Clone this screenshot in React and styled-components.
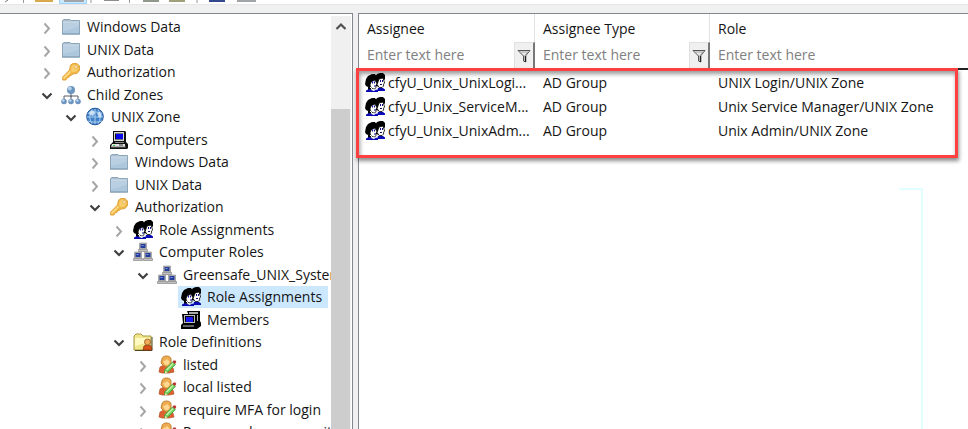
import React from "react";
import styled, { createGlobalStyle } from "styled-components";

const GlobalStyle = createGlobalStyle`
  * { box-sizing: border-box; }
  body {
    margin: 0;
    background: #f0f0f0;
    color: #151515;
    font: 14px/22px "Open Sans", "Noto Sans", sans-serif;
  }
`;

const Window = styled.div`
  display: flex;
  flex-direction: column;
  height: 100vh;
  overflow: hidden;
`;

const Toolbar = styled.div`
  flex: none;
  height: 5px;
  background: #fff;
  border-bottom: 1px solid #e6e6e6;
`;

const ToolbarArt = styled.svg`
  display: block;
`;

const Panes = styled.div`
  flex: 1;
  min-height: 0;
  display: flex;
  gap: 5px;
  padding-top: 8px;
`;

const TreePane = styled.nav`
  flex: none;
  width: 353px;
  display: flex;
  border: solid #828790;
  border-width: 1px 1px 0 0;
  background: #fff;
  padding: 2px 1px 0 0;
  overflow: hidden;
`;

const TreeList = styled.ul`
  flex: 1;
  min-width: 0;
  margin: 0;
  padding: 0;
  list-style: none;
  overflow: hidden;
`;

const TreeRow = styled.li`
  display: flex;
  align-items: center;
  height: 22px;
  padding-left: ${(p) => p.$level * 24 + 14}px;
  white-space: nowrap;
  &:nth-child(even) { height: 23px; }
`;

const Toggle = styled.button`
  flex: none;
  display: flex;
  align-items: center;
  justify-content: center;
  width: 18px;
  height: 20px;
  padding: 2px 0 0;
  border: 0;
  background: none;
`;

const ToggleGap = styled.span`
  flex: none;
  width: 18px;
`;

const TreeLabel = styled.a`
  flex: none;
  display: flex;
  align-items: center;
  align-self: stretch;
  gap: 6px;
  margin-left: 2px;
  padding: 0 6px 0 3px;
  color: inherit;
  text-decoration: none;
  background: ${(p) => (p.$selected ? "#cce8ff" : "transparent")};
`;

const Scrollbar = styled.div`
  flex: none;
  display: flex;
  flex-direction: column;
  width: 20px;
  background: #f0f0f0;
`;

const ScrollUp = styled.button`
  height: 20px;
  padding: 2px 0 0;
  border: 0;
  background: none;
  display: flex;
  align-items: center;
  justify-content: center;
`;

const ScrollThumb = styled.div`
  flex: 1;
  margin: 73px 1px 0 0;
  background: #cdcdcd;
`;

const ListPane = styled.main`
  flex: 1;
  min-width: 0;
  position: relative;
  border: solid #828790;
  border-width: 1px 0 0 1px;
  background: #fff;
`;

const Table = styled.table`
  width: 100%;
  table-layout: fixed;
  border-collapse: separate;
  border-spacing: 0;
`;

const Col = styled.col`
  width: ${(p) => p.$width};
`;

const HeadCell = styled.th`
  height: 28px;
  padding: 2px 0 0 8px;
  border-right: 1px solid ${(p) => (p.$last ? "transparent" : "#e2e2e2")};
  font-weight: 400;
  text-align: left;
`;

const FilterCell = styled.td`
  height: 28px;
  padding: 0;
  border-bottom: 2px solid #222;
`;

const FilterBox = styled.div`
  display: flex;
  height: 26px;
`;

const FilterInput = styled.input`
  flex: 1;
  min-width: 0;
  padding: 0 0 0 8px;
  border: 0;
  outline: 0;
  background: none;
  font: inherit;
  &::placeholder { color: #808080; opacity: 1; }
`;

const FilterButton = styled.button`
  flex: none;
  display: flex;
  align-items: center;
  justify-content: center;
  width: 21px;
  padding: 0;
  border: solid;
  border-width: 1px 2px 0 1px;
  border-color: #e0e0e0 #777 #777 #e0e0e0;
  background: #f0f0f0;
`;

const Cell = styled.td`
  height: 24px;
  padding: 2px 0 0 8px;
  white-space: nowrap;
`;

const Assignee = styled.div`
  display: flex;
  align-items: center;
  gap: 3px;
  height: 22px;
  margin-left: -2px;
`;

const Highlight = styled.div`
  position: absolute;
  top: 54px;
  left: -3px;
  right: 10px;
  height: 90px;
  border: 3px solid #ff4040;
  box-shadow: 1px 3px 4px rgba(0, 0, 0, 0.45), inset 1px 3px 4px rgba(0, 0, 0, 0.4);
  pointer-events: none;
`;

const Guide = styled.div`
  position: absolute;
  top: 174px;
  right: 45px;
  bottom: 0;
  width: 24px;
  border: solid #e0ffff;
  border-width: 2px 2px 0 0;
`;

const IconSvg = styled.svg`
  flex: none;
  display: block;
`;

const Svg = ({ w = 20, h = 20, children }) => (
  <IconSvg width={w} height={h} viewBox={`0 0 ${w} ${h}`} aria-hidden="true">
    {children}
  </IconSvg>
);

const Chevron = ({ open }) =>
  open ? (
    <Svg w={12} h={12}><path d="M1.500 3.500 6 8l4.500-4.500" fill="none" stroke="#404040" strokeWidth="2.200" /></Svg>
  ) : (
    <Svg w={12} h={12}><path d="M3.500 1.500 8 6.500 3.500 11.500" fill="none" stroke="#a6a6a6" strokeWidth="2" /></Svg>
  );

const Folder = () => (
  <Svg>
    <path d="M1.500 3.500 3 2.500h6l1 1h8.500V17h-17z" fill="#a9bfd1" stroke="#8fa6b9" />
    <path d="M2 5.500h16v11H2z" fill="#adc8dd" />
    <path d="M2 5.500h16v4L2 14z" fill="#bad0e2" />
    <path d="M2 5h16" stroke="#d3e1eb" />
    <path d="M1 17h18" stroke="#7f98ae" />
  </Svg>
);

const Key = () => (
  <Svg>
    <path d="M9.500 3 12 1.500h4l2.500 2.500v4.500L16 11.500l-4 .5-2 1.500-1.500.2-.4 1.600-1.900.4-1.200 2.300H1.700v-3L8.500 8z" fill="#efb647" stroke="#e3a640" strokeLinejoin="round" />
    <path d="m10.500 4 2.500-1.500 3.500.8 1 3-2 3.200-4 .8-1.500-2z" fill="#f8cd6c" />
    <path d="m2.500 16.500 7-7" stroke="#ffe18e" strokeWidth="1.500" />
    <circle cx="15" cy="5" r="1.400" fill="#fff8df" stroke="#d89731" strokeWidth=".6" />
  </Svg>
);

const Zones = () => (
  <Svg>
    <path d="M10 8v4M3 14v-3h14v3M10 11v3" stroke="#555e69" fill="none" />
    <circle cx="10" cy="5" r="4" fill="#6b94c0" />
    <circle cx="8.800" cy="3.500" r="2" fill="#b4cfe8" />
    {[3, 10, 17].map((x) => (
      <g key={x}>
        <circle cx={x} cy="16.500" r="2.800" fill="#6d94bf" />
        <circle cx={x - 0.7} cy="15.500" r="1.200" fill="#bcd7ef" />
      </g>
    ))}
  </Svg>
);

const Globe = () => (
  <Svg>
    <circle cx="10" cy="9.500" r="8.300" fill="#3f80c6" stroke="#24559a" />
    <path d="M3 6.500c4-2 10-2 14 0M2 10h16M3 14c4 1.500 10 1.500 14 0M10 2v15M7 2.500c-3 4-3 10 0 14M13 2.500c3 4 3 10 0 14" fill="none" stroke="#a8cef2" />
    <path d="m4 5 4-2 2 3-2 3-3-1zm8 1 3-1 2 4-3 2z" fill="#e2f1fd" opacity=".8" />
  </Svg>
);

const Computer = () => (
  <Svg>
    <path d="M4 1h12l1 1v10l2 2v4l-1 1H1v-4l3-3z" fill="#111" />
    <path d="M5 2h10v9H5z" fill="#d6d6d6" />
    <path d="M6 3.500h8v6H6z" fill="#111" />
    <path d="M7 4h7v5H7z" fill="#0909ee" />
    <path d="M6 12h9v1H6z" fill="#888" />
    <path d="M3 14h13v3H2z" fill="#e3e3e3" />
    <path d="M2 17h15" stroke="#777" />
    <path d="M4 15h2v1H4z" fill="#38cf38" />
    <path d="M10 15h4" stroke="#333" />
  </Svg>
);

const People = () => (
  <Svg>
    <path d="m11 13-1-9 2-3 3-1h3l2 2v4l-2 3-3 5z" fill="#000" />
    <path d="m14 6 4-1 1 3 .6 2-1 1v2l-1.500 1.500h-3l-2-3z" fill="#fff" stroke="#000" strokeWidth=".8" />
    <path d="M15 7h1v2h-1zm2 0h1v2h-1zm-2 4h2v1h-2z" fill="#101080" />
    <path d="M13 15h5l2 1.500V18h-8z" fill="#0909b5" />
    <path d="m0 11 1-5 2-3 4-2h3l2 3v4l-2 3-3 5-2 1H3v-3l-2-1z" fill="#000" />
    <path d="m6 9 4-2 1 2 1 2-1 1v3l-2 1-3-1-1-3z" fill="#fff" stroke="#000" strokeWidth=".7" />
    <path d="M7 8.500h1v2H7zm2 0h1v2H9zm0 4h2v1H9z" fill="#1010a0" />
    <path d="M1 19v-1.500l3-1.500 2 1 3 1 2-1.500 2 1V19z" fill="#0909b5" />
    <path d="m5 14 3 3h1" fill="none" stroke="#fff" />
  </Svg>
);

const MiniPc = ({ x, y }) => (
  <g transform={`translate(${x} ${y})`}>
    <path d="M1 0h7v6H1z" fill="#b4b4b4" stroke="#8c8c8c" strokeWidth=".6" />
    <path d="M2 1h5v4H2z" fill="#263c9b" />
    <path d="M3 2h2v1H3z" fill="#7e9ae0" />
    <path d="M0 6.500h9v2H0z" fill="#c2c2c2" stroke="#777" strokeWidth=".6" />
  </g>
);

const ComputerRoles = () => (
  <Svg><MiniPc x={5.5} y={1} /><MiniPc x={0.5} y={10} /><MiniPc x={10.5} y={10} /></Svg>
);

const Members = () => (
  <Svg>
    <path d="M6 1h13v10l1 2v3l-4 3h-3z" fill="#000" />
    <path d="M8 2h9v2H8z" fill="#aaa" />
    <path d="M16 5h1v6h-1z" fill="#aaa" />
    <path d="M1 4h14v10l1 1v3l-1 1H0v-4l2-2z" fill="#000" />
    <path d="M3 5h11v8H3z" fill="#b9b9b9" />
    <path d="M4 6h9v6H4z" fill="#000" />
    <path d="M5 7h7v5H5z" fill="#1717ef" />
    <path d="M2 16h11" stroke="#c6c6c6" />
  </Svg>
);

const RoleFolder = () => (
  <Svg>
    <path d="M1 4 3 2h5l2 2h8v14H1z" fill="#f0e78a" stroke="#a89840" />
    <path d="M2 6h15v4L2 14z" fill="#fffbc0" />
    <path d="M2 18.500h17V5" fill="none" stroke="#4c451c" />
    <path d="m10 18 1-4 3-1 4 1 1 4z" fill="#d95318" stroke="#8e3510" strokeWidth=".8" />
    <circle cx="14.500" cy="10" r="3" fill="#eeae58" stroke="#9b5720" strokeWidth=".8" />
  </Svg>
);

const Role = () => (
  <Svg>
    <path d="m2 17 1-5 4-2h5l4 3 1 4-5 1H5z" fill="#df5f30" stroke="#b05022" strokeWidth=".7" />
    <path d="M5 4c0-4 9-4 9 0v4l-2 3-3 1-3-2-2-2z" fill="#edac52" stroke="#c3812f" />
    <path d="M6 6c2 0 3-1 4-2l3 3-2 3H8z" fill="#ffd891" />
    <path d="m8 14.500 7.500-7.500 3 2.500L11 17l-3.500 1z" fill="#72d15d" stroke="#429e38" strokeWidth=".8" />
    <path d="m9.500 15 6.500-6.500" stroke="#c6f3b2" strokeWidth="1.300" />
    <path d="m15.500 7 1-1.500h2l.8 1.500-1.300 2z" fill="#b83030" />
    <path d="M8 16v2.500l2.500-1z" fill="#f6e4b1" />
  </Svg>
);

const Funnel = () => (
  <Svg w={14} h={16}>
    <path d="M1 2.500h12L8.500 8v6l-2-1V8z" fill="#e8e8e8" stroke="#555" />
    <path d="M3 4h8L7.500 8" fill="none" stroke="#aaa" />
    <path d="M8.500 8v6" stroke="#222" strokeWidth="1.500" />
  </Svg>
);

const tree = [
  [1, "Windows Data", Folder, false],
  [1, "UNIX Data", Folder, false],
  [1, "Authorization", Key, false],
  [1, "Child Zones", Zones, true],
  [2, "UNIX Zone", Globe, true],
  [3, "Computers", Computer, false],
  [3, "Windows Data", Folder, false],
  [3, "UNIX Data", Folder, false],
  [3, "Authorization", Key, true],
  [4, "Role Assignments", People, false],
  [4, "Computer Roles", ComputerRoles, true],
  [5, "Greensafe_UNIX_Systems", ComputerRoles, true],
  [6, "Role Assignments", People, null, true],
  [6, "Members", Members, null],
  [4, "Role Definitions", RoleFolder, true],
  [5, "listed", Role, false],
  [5, "local listed", Role, false],
  [5, "require MFA for login", Role, false],
  [5, "Rescue - always permit login", Role, false],
];

const columns = ["Assignee", "Assignee Type", "Role"];

const assignments = [
  ["cfyU_Unix_UnixLogi...", "AD Group", "UNIX Login/UNIX Zone"],
  ["cfyU_Unix_ServiceM...", "AD Group", "Unix Service Manager/UNIX Zone"],
  ["cfyU_Unix_UnixAdm...", "AD Group", "Unix Admin/UNIX Zone"],
];

export default function App() {
  return (
    <Window>
      <GlobalStyle />
      <Toolbar>
        <ToolbarArt width="270" height="4" viewBox="0 0 270 4" aria-hidden="true">
          <path d="m5 2 3-2" stroke="#777" />
          <path d="M23.500 0v3M91 0v3M129.500 0v3M197 0v3" stroke="#999" />
          <path d="M35 0h18v2H35z" fill="#d9a94c" />
          <path d="M59.500-1h27v4.500h-27z" fill="#cce8ff" stroke="#99d1ff" />
          <path d="M64 0h20v2H64z" fill="#a0a4a8" />
          <path d="M104 0h15v1h-15z" fill="#8d8d8d" />
          <path d="M143 0h16v2h-16z" fill="#8e998c" />
          <path d="M169 0h16v2h-16z" fill="#a09f7c" />
          <path d="M209 0h16v2h-16z" fill="#34498c" />
          <path d="M237 0h19v2h-19z" fill="#a1a5a8" />
        </ToolbarArt>
      </Toolbar>
      <Panes>
        <TreePane aria-label="Zones">
          <TreeList>
            {tree.map(([level, label, Icon, open, selected], i) => (
              <TreeRow key={i} $level={level}>
                {open === null ? (
                  <ToggleGap />
                ) : (
                  <Toggle aria-label={`Toggle ${label}`} aria-expanded={open}>
                    <Chevron open={open} />
                  </Toggle>
                )}
                <TreeLabel href="#" $selected={selected}>
                  <Icon />
                  {label}
                </TreeLabel>
              </TreeRow>
            ))}
          </TreeList>
          <Scrollbar>
            <ScrollUp aria-label="Scroll up">
              <Svg w={12} h={12}><path d="M1.500 8 6 3.500 10.500 8" fill="none" stroke="#505050" strokeWidth="2.200" /></Svg>
            </ScrollUp>
            <ScrollThumb />
          </Scrollbar>
        </TreePane>
        <ListPane>
          <Table>
            <colgroup>
              <Col $width="176px" />
              <Col $width="175px" />
              <Col $width="auto" />
            </colgroup>
            <thead>
              <tr>
                {columns.map((name, i) => (
                  <HeadCell key={name} scope="col" $last={i === 2}>{name}</HeadCell>
                ))}
              </tr>
              <tr>
                {columns.map((name, i) => (
                  <FilterCell key={name}>
                    <FilterBox>
                      <FilterInput aria-label={`Filter ${name}`} placeholder="Enter text here" />
                      {i < 2 && <FilterButton aria-label={`Filter options for ${name}`}><Funnel /></FilterButton>}
                    </FilterBox>
                  </FilterCell>
                ))}
              </tr>
            </thead>
            <tbody>
              {assignments.map(([who, type, role]) => (
                <tr key={who}>
                  <Cell>
                    <Assignee><People />{who}</Assignee>
                  </Cell>
                  <Cell>{type}</Cell>
                  <Cell>{role}</Cell>
                </tr>
              ))}
            </tbody>
          </Table>
          <Highlight />
          <Guide />
        </ListPane>
      </Panes>
    </Window>
  );
}
